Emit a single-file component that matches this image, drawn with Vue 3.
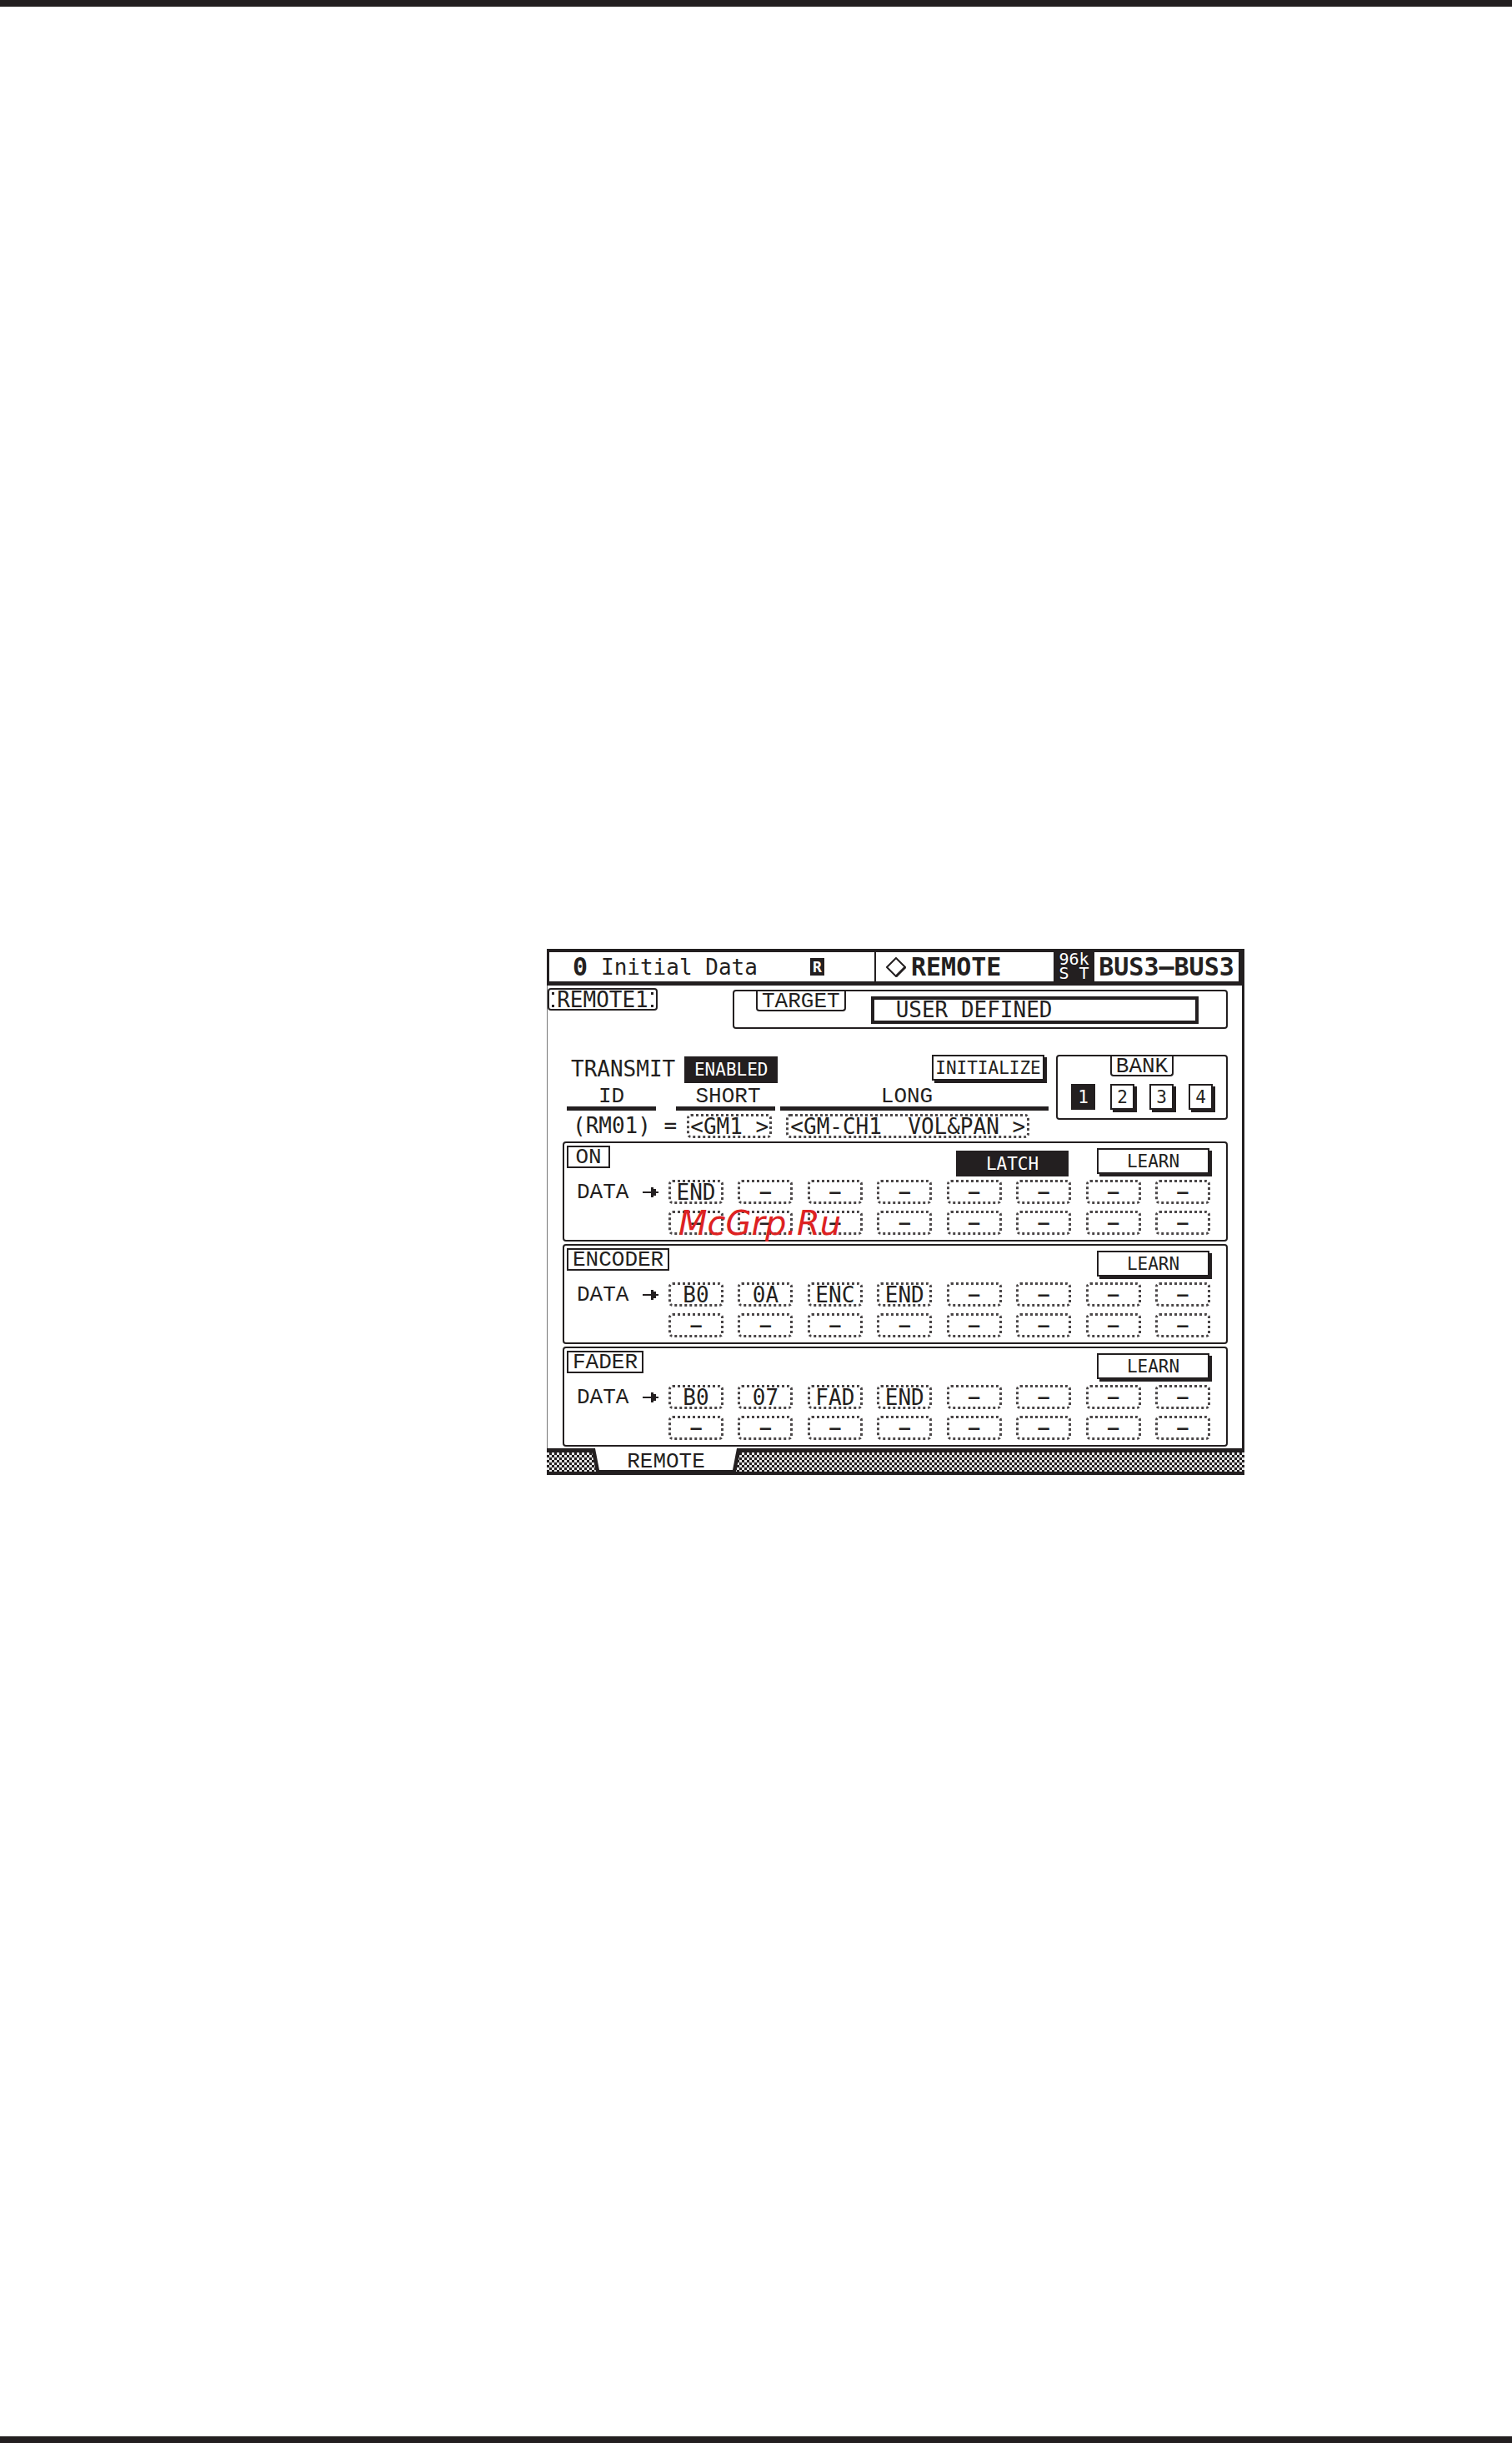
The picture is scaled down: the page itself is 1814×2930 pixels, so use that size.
<script setup>
import { ref } from 'vue'

const blank = (n) => Array(n).fill('–')
const sections = ref([
  { name: 'ON', latch: true, cells: ['END', ...blank(15)] },
  { name: 'ENCODER', latch: false, cells: ['B0', '0A', 'ENC', 'END', ...blank(12)] },
  { name: 'FADER', latch: false, cells: ['B0', '07', 'FAD', 'END', ...blank(12)] },
])
const clock = '96k\nS T'
const bank = ref(1)
const shortName = ref('<GM1 >')
const longName = ref('<GM-CH1  VOL&PAN >')
</script>

<template>
  <div class="page">
    <main class="screen">
      <header class="head">
        <div class="scene">
          <b class="scene-no">0</b>
          <span class="scene-name">Initial Data</span>
          <span class="flag">R</span>
        </div>
        <div class="title">
          <svg width="24" height="24" viewBox="0 0 24 24" aria-hidden="true">
            <path d="M12 1 L1 12 L12 23 L23 12 Z" fill="none" stroke="#231f20" stroke-width="2" />
            <path d="M12 23 L23 12" stroke="#231f20" stroke-width="3" />
          </svg>
          <h1>REMOTE</h1>
        </div>
        <div class="clock">{{ clock }}</div>
        <div class="bus">BUS3–BUS3</div>
      </header>

      <div class="body">
        <div class="row-target">
          <div class="remote-no">REMOTE1</div>
          <div class="target">
            <label class="tab-label" for="target">TARGET</label>
            <select id="target" class="target-select">
              <option>USER DEFINED</option>
            </select>
          </div>
        </div>

        <div class="row-setup">
          <div class="setup">
            <div class="transmit">
              <span>TRANSMIT</span>
              <button type="button" class="solid enabled">ENABLED</button>
              <button type="button" class="raised init">INITIALIZE</button>
            </div>
            <div class="heads">
              <span class="h-id">ID</span>
              <label class="h-short" for="short">SHORT</label>
              <label class="h-long" for="long">LONG</label>
            </div>
            <div class="values">
              <span>(RM01) =</span>
              <input id="short" v-model="shortName" class="dotted short" />
              <input id="long" v-model="longName" class="dotted long" />
            </div>
          </div>
          <div class="bank">
            <span class="tab-label">BANK</span>
            <div class="bank-buttons">
              <button
                v-for="n in 4"
                :key="n"
                type="button"
                :class="bank === n ? 'solid' : 'raised'"
                @click="bank = n"
              >{{ n }}</button>
            </div>
          </div>
        </div>

        <div class="sections">
          <section v-for="s in sections" :key="s.name" class="section">
            <div class="section-top">
              <h2>{{ s.name }}</h2>
              <button v-if="s.latch" type="button" class="solid latch">LATCH</button>
              <button type="button" class="raised learn">LEARN</button>
            </div>
            <div class="section-data">
              <span class="data-label">DATA</span>
              <svg class="arrow" width="19" height="14" viewBox="0 0 19 14" aria-hidden="true">
                <path d="M0 6 H10 V1 H13 V3 H16 V6 H19 V8 H16 V11 H13 V13 H10 V8 H0 Z" fill="#231f20" />
              </svg>
              <div class="cells">
                <input
                  v-for="(c, i) in s.cells"
                  :key="i"
                  v-model="s.cells[i]"
                  class="dotted cell"
                  :class="{ unset: c === '–' }"
                  :aria-label="s.name + ' data ' + (i + 1)"
                />
              </div>
            </div>
            <div v-if="s.latch" class="watermark">McGrp.Ru</div>
          </section>
        </div>
      </div>

      <nav class="tabs">
        <button type="button" class="page-tab"><span>REMOTE</span></button>
      </nav>
    </main>
  </div>
</template>

<style>
body {
  margin: 0;
  background: #fff;
}
</style>

<style scoped>
.page,
.page * {
  box-sizing: border-box;
}
.page {
  min-height: 100vh;
  border-top: 8px solid #231f20;
  border-bottom: 8px solid #231f20;
  padding: 1130px 321px 1153px 656px;
  color: #231f20;
  font: 26px/28px "DejaVu Sans Mono", monospace;
}
button,
input,
select {
  margin: 0;
  padding: 0;
  border: 0;
  border-radius: 0;
  background: #fff;
  color: inherit;
  font: inherit;
  outline: none;
}
.screen {
  display: flex;
  flex-direction: column;
}

.head {
  display: flex;
  height: 44px;
  border: solid #231f20;
  border-width: 4px 7px 5px 3px;
  white-space: pre;
}
.scene {
  flex: 1;
  display: flex;
  align-items: center;
  padding-left: 28px;
  border-right: 2px solid #231f20;
}
.scene-no {
  font-size: 30px;
  width: 34px;
}
.flag {
  margin-left: 63px;
  width: 17px;
  height: 21px;
  background: #231f20;
  color: #fff;
  font: bold 18px/21px "DejaVu Sans Mono", monospace;
  text-align: center;
}
.title {
  display: flex;
  align-items: center;
  gap: 6px;
  width: 213px;
  padding-left: 12px;
}
h1,
.bus {
  margin: 0;
  font-size: 30px;
  line-height: 35px;
  font-weight: bold;
}
.clock {
  width: 49px;
  background: #231f20;
  color: #fff;
  font-size: 20px;
  line-height: 17px;
  text-align: center;
}
.bus {
  width: 173px;
  text-align: center;
}

.body {
  display: flex;
  flex-direction: column;
  padding: 3px 17px 2px 0;
  border-left: 1px solid #777;
  border-right: 3px solid #231f20;
}
.row-target {
  display: flex;
  align-items: flex-start;
}
.remote-no {
  width: 132px;
  height: 27px;
  border: 2px solid #231f20;
  border-radius: 4px;
  line-height: 24px;
  text-align: center;
  background:
    linear-gradient(#231f20, #231f20) 3px 3px / 3px 3px no-repeat,
    linear-gradient(#231f20, #231f20) 3px 18px / 3px 3px no-repeat,
    linear-gradient(#231f20, #231f20) 122px 3px / 3px 3px no-repeat,
    linear-gradient(#231f20, #231f20) 122px 18px / 3px 3px no-repeat;
}
.target {
  flex: 1;
  display: flex;
  height: 47px;
  margin: 2px 0 0 90px;
  padding-left: 26px;
  border: 2px solid #231f20;
  border-radius: 4px;
}
.tab-label {
  height: 24px;
  padding: 0 5px;
  border: 2px solid #231f20;
  border-top: 0;
  border-radius: 0 0 4px 4px;
  font: 26px/24px "Liberation Mono", monospace;
}
.target-select {
  appearance: none;
  flex: 1;
  height: 33px;
  margin: 6px 33px 0 30px;
  padding-left: 26px;
  border: 4px solid #231f20;
  line-height: 25px;
}

.row-setup {
  display: flex;
  align-items: flex-start;
  gap: 9px;
  margin: 31px 0 0 23px;
}
.setup {
  flex: 1;
}
.transmit {
  display: flex;
  align-items: center;
  height: 34px;
  padding: 0 5px;
}
.solid {
  background: #231f20;
  color: #fff;
  font-size: 21px;
}
.raised {
  border: 2px solid #231f20;
  box-shadow: 3px 3px 0 #231f20;
  font-size: 21px;
  line-height: 24px;
}
.enabled {
  align-self: flex-end;
  width: 112px;
  height: 32px;
  margin-left: 11px;
}
.init {
  align-self: flex-start;
  width: 135px;
  height: 31px;
  margin-left: auto;
}
.heads {
  display: flex;
  font-family: "Liberation Mono", monospace;
  text-align: center;
}
.heads > * {
  height: 33px;
  padding-top: 2px;
  border-bottom: 5px solid #231f20;
}
.h-id {
  width: 107px;
  margin-right: 24px;
}
.h-short {
  width: 119px;
  margin-right: 6px;
  padding-left: 6px;
}
.h-long {
  flex: 1;
  padding-right: 18px;
}
.values {
  display: flex;
  padding: 4px 0 0 7px;
  white-space: pre;
}
.dotted {
  height: 29px;
  border: 3px dotted #4a4647;
  border-radius: 5px;
  text-align: center;
}
.short {
  width: 102px;
  margin-left: 12px;
}
.long {
  width: 292px;
  margin-left: 17px;
}
.bank {
  display: flex;
  flex-direction: column;
  align-items: center;
  width: 206px;
  height: 78px;
  border: 2px solid #231f20;
  border-radius: 4px;
}
.bank-buttons {
  display: flex;
  gap: 18px;
  margin-top: 9px;
}
.bank-buttons button {
  width: 29px;
  height: 31px;
}

.sections {
  display: flex;
  flex-direction: column;
  gap: 3px;
  margin: 4px 0 0 18px;
}
.section {
  position: relative;
  height: 120px;
  border: 2px solid #231f20;
  border-radius: 4px;
}
.section-top {
  display: flex;
  align-items: flex-start;
  height: 44px;
  padding: 3px 20px 0 3px;
}
h2 {
  min-width: 52px;
  height: 27px;
  margin: 0 auto 0 0;
  padding: 0 5px;
  border: 2px solid #231f20;
  font: 26px/25px "Liberation Mono", monospace;
  text-align: center;
}
.latch {
  width: 135px;
  height: 31px;
  margin: 6px 34px 0 0;
}
.learn {
  width: 135px;
  height: 31px;
  margin-top: 3px;
}
.section-data {
  display: flex;
  align-items: flex-start;
  padding: 0 19px 0 15px;
}
.data-label {
  font-family: "Liberation Mono", monospace;
  line-height: 30px;
  width: 79px;
}
.arrow {
  margin: 8px 12px 0 0;
}
.cells {
  flex: 1;
  display: grid;
  grid-template-columns: repeat(8, 66px);
  justify-content: space-between;
  row-gap: 8px;
}
.cell {
  width: 66px;
}
.unset {
  padding-bottom: 1px;
  font-size: 22px;
  font-weight: bold;
}
.watermark {
  position: absolute;
  left: 137px;
  top: 74px;
  color: #dd2222;
  font: italic 40px/44px "DejaVu Sans", sans-serif;
  pointer-events: none;
}

.tabs {
  height: 32px;
  padding-left: 53px;
  border-top: 5px solid #231f20;
  border-bottom: 4px solid #231f20;
  background: repeating-conic-gradient(#231f20 0 25%, #e4e4e4 0 50%) 0 0 / 6px 6px;
}
.page-tab {
  display: block;
  width: 180px;
  height: 32px;
  margin-top: -5px;
  padding: 0 5px 6px;
  background: #231f20;
  clip-path: polygon(0 0, 100% 0, calc(100% - 7px) 100%, 7px 100%);
  font-family: "Liberation Mono", monospace;
}
.page-tab span {
  display: block;
  height: 26px;
  padding-top: 2px;
  background: #fff;
  clip-path: polygon(0 0, 100% 0, calc(100% - 5px) 100%, 5px 100%);
}
</style>
